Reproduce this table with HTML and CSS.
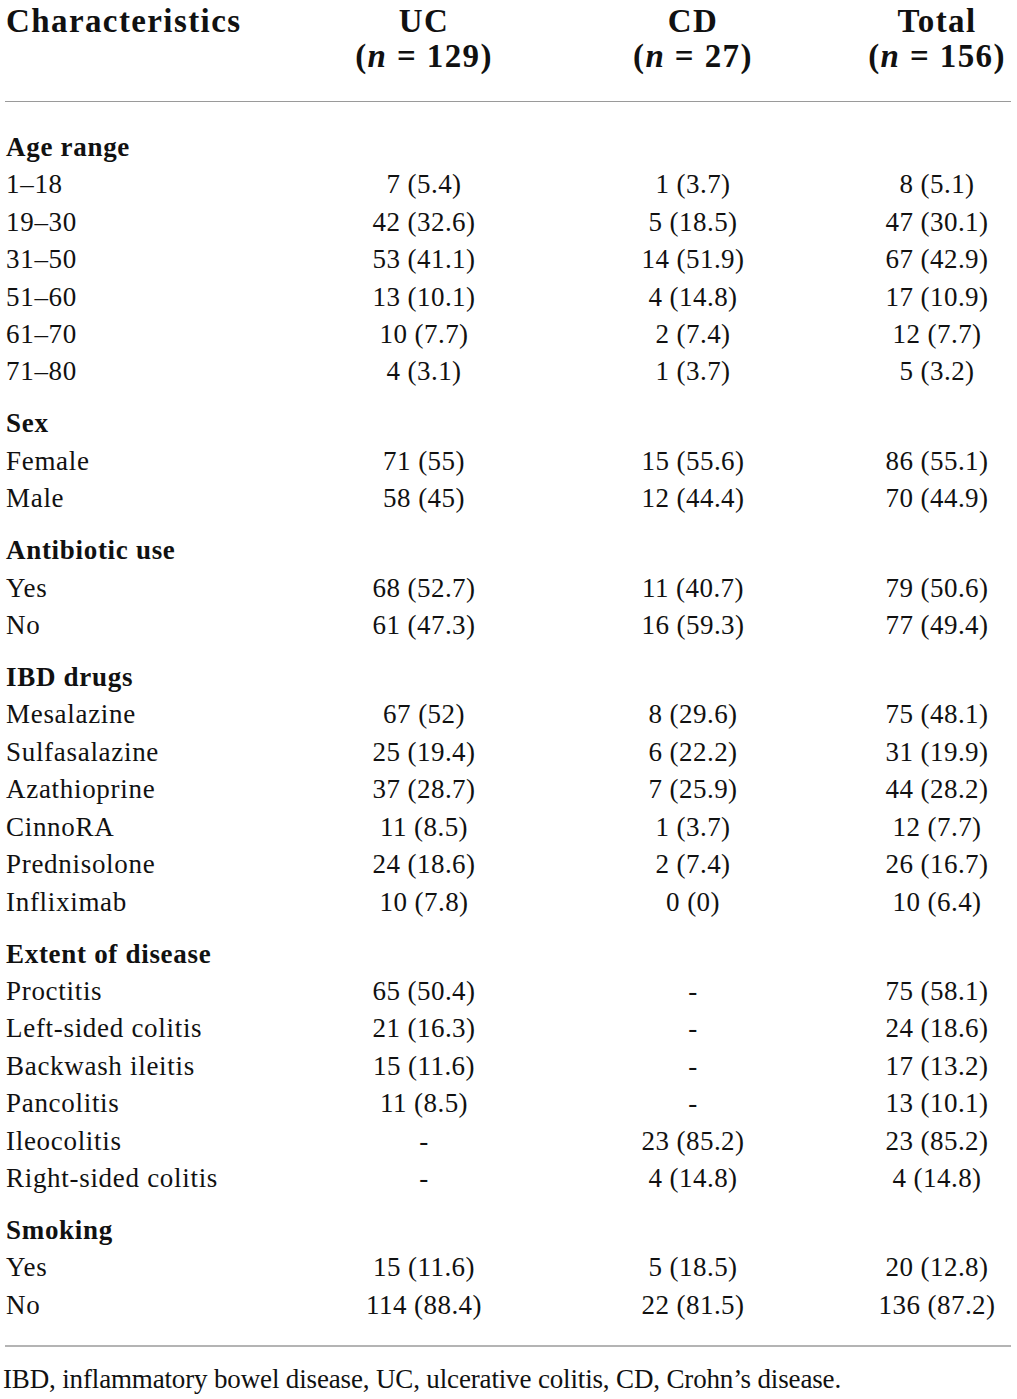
FILE: index.html
```html
<!DOCTYPE html>
<html lang="en">
<head>
<meta charset="utf-8">
<title>Characteristics of patients</title>
<link rel="stylesheet" href="styles.css">
</head>
<body>
<div class="table">
  <div class="head">
    <div class="h-label">Characteristics</div>
    <div class="h-col">UC<br>(<i>n</i> = 129)</div>
    <div class="h-col">CD<br>(<i>n</i> = 27)</div>
    <div class="h-col">Total<br>(<i>n</i> = 156)</div>
  </div>
  <div class="rule"></div>
  <div class="body">
    <div class="section">
      <div class="row"><div class="sec-title">Age range</div></div>
      <div class="row"><div>1–18</div><div class="v">7 (5.4)</div><div class="v">1 (3.7)</div><div class="v">8 (5.1)</div></div>
      <div class="row"><div>19–30</div><div class="v">42 (32.6)</div><div class="v">5 (18.5)</div><div class="v">47 (30.1)</div></div>
      <div class="row"><div>31–50</div><div class="v">53 (41.1)</div><div class="v">14 (51.9)</div><div class="v">67 (42.9)</div></div>
      <div class="row"><div>51–60</div><div class="v">13 (10.1)</div><div class="v">4 (14.8)</div><div class="v">17 (10.9)</div></div>
      <div class="row"><div>61–70</div><div class="v">10 (7.7)</div><div class="v">2 (7.4)</div><div class="v">12 (7.7)</div></div>
      <div class="row"><div>71–80</div><div class="v">4 (3.1)</div><div class="v">1 (3.7)</div><div class="v">5 (3.2)</div></div>
    </div>
    <div class="section">
      <div class="row"><div class="sec-title">Sex</div></div>
      <div class="row"><div>Female</div><div class="v">71 (55)</div><div class="v">15 (55.6)</div><div class="v">86 (55.1)</div></div>
      <div class="row"><div>Male</div><div class="v">58 (45)</div><div class="v">12 (44.4)</div><div class="v">70 (44.9)</div></div>
    </div>
    <div class="section">
      <div class="row"><div class="sec-title">Antibiotic use</div></div>
      <div class="row"><div>Yes</div><div class="v">68 (52.7)</div><div class="v">11 (40.7)</div><div class="v">79 (50.6)</div></div>
      <div class="row"><div>No</div><div class="v">61 (47.3)</div><div class="v">16 (59.3)</div><div class="v">77 (49.4)</div></div>
    </div>
    <div class="section">
      <div class="row"><div class="sec-title">IBD drugs</div></div>
      <div class="row"><div>Mesalazine</div><div class="v">67 (52)</div><div class="v">8 (29.6)</div><div class="v">75 (48.1)</div></div>
      <div class="row"><div>Sulfasalazine</div><div class="v">25 (19.4)</div><div class="v">6 (22.2)</div><div class="v">31 (19.9)</div></div>
      <div class="row"><div>Azathioprine</div><div class="v">37 (28.7)</div><div class="v">7 (25.9)</div><div class="v">44 (28.2)</div></div>
      <div class="row"><div>CinnoRA</div><div class="v">11 (8.5)</div><div class="v">1 (3.7)</div><div class="v">12 (7.7)</div></div>
      <div class="row"><div>Prednisolone</div><div class="v">24 (18.6)</div><div class="v">2 (7.4)</div><div class="v">26 (16.7)</div></div>
      <div class="row"><div>Infliximab</div><div class="v">10 (7.8)</div><div class="v">0 (0)</div><div class="v">10 (6.4)</div></div>
    </div>
    <div class="section">
      <div class="row"><div class="sec-title">Extent of disease</div></div>
      <div class="row"><div>Proctitis</div><div class="v">65 (50.4)</div><div class="v">-</div><div class="v">75 (58.1)</div></div>
      <div class="row"><div>Left-sided colitis</div><div class="v">21 (16.3)</div><div class="v">-</div><div class="v">24 (18.6)</div></div>
      <div class="row"><div>Backwash ileitis</div><div class="v">15 (11.6)</div><div class="v">-</div><div class="v">17 (13.2)</div></div>
      <div class="row"><div>Pancolitis</div><div class="v">11 (8.5)</div><div class="v">-</div><div class="v">13 (10.1)</div></div>
      <div class="row"><div>Ileocolitis</div><div class="v">-</div><div class="v">23 (85.2)</div><div class="v">23 (85.2)</div></div>
      <div class="row"><div>Right-sided colitis</div><div class="v">-</div><div class="v">4 (14.8)</div><div class="v">4 (14.8)</div></div>
    </div>
    <div class="section">
      <div class="row"><div class="sec-title">Smoking</div></div>
      <div class="row"><div>Yes</div><div class="v">15 (11.6)</div><div class="v">5 (18.5)</div><div class="v">20 (12.8)</div></div>
      <div class="row"><div>No</div><div class="v">114 (88.4)</div><div class="v">22 (81.5)</div><div class="v">136 (87.2)</div></div>
    </div>
  </div>
  <div class="rule rule-bottom"></div>
  <p class="note">IBD, inflammatory bowel disease, UC, ulcerative colitis, CD, Crohn’s disease.</p>
</div>
</body>
</html>
```

FILE: styles.css
```css
html, body {
  margin: 0;
  padding: 0;
  background: #fff;
}

body {
  font-family: "Liberation Serif", "Times New Roman", serif;
  color: #111;
}

.table {
  width: 1006px;
  margin-left: 5px;
}

.head,
.row {
  display: grid;
  grid-template-columns: 320px 198px 340px 148px;
}

.head {
  padding-top: 4px;
  font-weight: bold;
  font-size: 33px;
  line-height: 35px;
  letter-spacing: 1.4px;
}

.h-label {
  padding-left: 1px;
}

.h-col {
  text-align: center;
}

.rule {
  height: 1px;
  background: #9a9a9a;
  margin-top: 27px;
}

.body {
  padding-top: 27px;
}

.section + .section {
  margin-top: 14.6px;
}

.row {
  font-size: 27px;
  line-height: 37.4px;
  letter-spacing: 0.45px;
}

.row > div:first-child {
  padding-left: 1px;
  letter-spacing: 0.7px;
}

.sec-title {
  font-weight: bold;
  grid-column: 1 / 5;
}

.v {
  text-align: center;
}

.rule-bottom {
  height: 2px;
  background: #b4b4b4;
  margin-top: 21px;
}

.note {
  margin: 14px 0 0 -2px;
  font-size: 27px;
  line-height: 37px;
  letter-spacing: -0.15px;
}
```
